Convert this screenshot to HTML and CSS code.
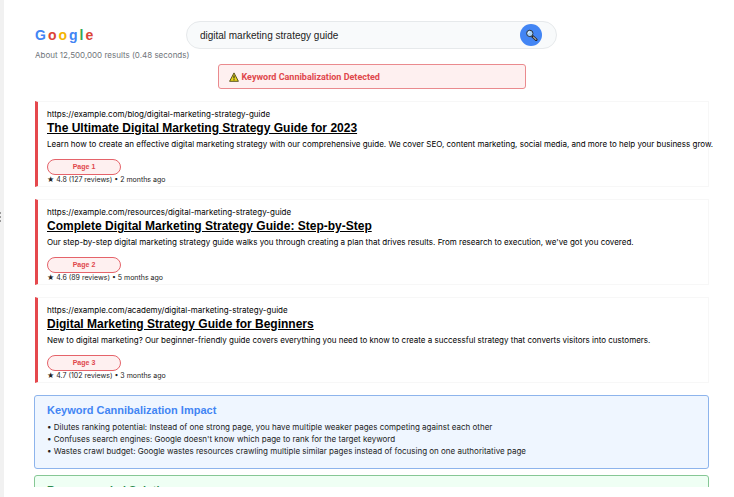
FILE: index.html
```html
<!DOCTYPE html>
<html lang="en">
<head>
  <meta charset="utf-8">
  <title>Keyword Cannibalization</title>
  <link rel="stylesheet" href="styles.css">
</head>
<body>
  <div class="gutter"><span></span><span></span><span></span></div>
  <main class="page">
    <header class="header">
      <div class="brand">
        <div class="logo">
          <span class="blue">G</span><span class="red">o</span><span class="yellow">o</span><span class="blue">g</span><span class="green">l</span><span class="red">e</span>
        </div>
        <p class="stats">About 12,500,000 results (0.48 seconds)</p>
      </div>
      <form class="search">
        <input type="text" aria-label="Search" value="digital marketing strategy guide">
        <button type="submit" aria-label="Search">
          <svg width="14" height="14" viewBox="0 0 14 14">
            <path d="M8.4 8.2l3.8 3.5" stroke="#222" stroke-width="2.6" stroke-linecap="round"/>
            <path d="M9.3 9l2.7 2.5" stroke="#a5a5a5" stroke-width="1.1" stroke-linecap="round"/>
            <circle cx="5.8" cy="5.4" r="3.2" fill="#a9d2f5" stroke="#2a3340" stroke-width="1"/>
            <path d="M4.2 5.2a1.7 1.7 0 0 1 1.5-1.5" fill="none" stroke="#fff" stroke-width="1"/>
          </svg>
        </button>
      </form>
    </header>

    <div class="alert">
      <svg width="10" height="10" viewBox="0 0 10 10">
        <path d="M5 .9L9.4 9.3H.6z" fill="#ead61c" stroke="#4a4510" stroke-width=".9" stroke-linejoin="round"/>
        <path d="M5 3.5v2.9M5 7.2v1.1" stroke="#222" stroke-width="1.1"/>
      </svg>
      <span>Keyword Cannibalization Detected</span>
    </div>

    <article class="result">
      <p class="url">https://example.com/blog/digital-marketing-strategy-guide</p>
      <h3><a href="#">The Ultimate Digital Marketing Strategy Guide for 2023</a></h3>
      <p class="desc">Learn how to create an effective digital marketing strategy with our comprehensive guide. We cover SEO, content marketing, social media, and more to help your business grow.</p>
      <span class="badge">Page 1</span>
      <p class="meta">★ 4.8 (127 reviews) • 2 months ago</p>
    </article>

    <article class="result">
      <p class="url">https://example.com/resources/digital-marketing-strategy-guide</p>
      <h3><a href="#">Complete Digital Marketing Strategy Guide: Step-by-Step</a></h3>
      <p class="desc">Our step-by-step digital marketing strategy guide walks you through creating a plan that drives results. From research to execution, we've got you covered.</p>
      <span class="badge">Page 2</span>
      <p class="meta">★ 4.6 (89 reviews) • 5 months ago</p>
    </article>

    <article class="result">
      <p class="url">https://example.com/academy/digital-marketing-strategy-guide</p>
      <h3><a href="#">Digital Marketing Strategy Guide for Beginners</a></h3>
      <p class="desc">New to digital marketing? Our beginner-friendly guide covers everything you need to know to create a successful strategy that converts visitors into customers.</p>
      <span class="badge">Page 3</span>
      <p class="meta">★ 4.7 (102 reviews) • 3 months ago</p>
    </article>

    <section class="panel impact">
      <h2>Keyword Cannibalization Impact</h2>
      <p>• Dilutes ranking potential: Instead of one strong page, you have multiple weaker pages competing against each other</p>
      <p>• Confuses search engines: Google doesn't know which page to rank for the target keyword</p>
      <p>• Wastes crawl budget: Google wastes resources crawling multiple similar pages instead of focusing on one authoritative page</p>
    </section>

    <section class="panel solution">
      <h2>Recommended Solution</h2>
    </section>
  </main>
</body>
</html>
```

FILE: styles.css
```css
* {
  box-sizing: border-box;
}

body {
  margin: 0;
  height: 100vh;
  display: flex;
  overflow: hidden;
  background: #fff;
  color: #000;
  font-family: Inter, Arial, sans-serif;
  font-size: 8px;
  line-height: 12px;
}

p, h2, h3 {
  margin: 0;
}

h2, h3, .logo {
  font-family: "Liberation Sans", Arial, sans-serif;
}

/* resize handle on the left edge */
.gutter {
  width: 4px;
  flex: none;
  display: flex;
  flex-direction: column;
  align-items: flex-start;
  justify-content: center;
  gap: 2px;
  padding-bottom: 64px;
  background: #f1f1f1;
}

.gutter span {
  width: 1px;
  height: 2px;
  background: #999;
}

.page {
  flex: 1;
  min-width: 0;
  margin-bottom: 10px;
  padding: 21px 25px 0 30px;
  overflow: hidden;
}

.header {
  display: grid;
  grid-template-columns: minmax(0, 1fr) 55% minmax(0, 1fr);
  height: 43px;
}

.brand {
  padding: 5px 0 0 1px;
  white-space: nowrap;
}

.logo {
  display: flex;
  gap: 2px;
  font-size: 14px;
  font-weight: bold;
  line-height: 18px;
}

.blue { color: #4285f4; }
.red { color: #db4437; }
.yellow { color: #f4b400; }
.green { color: #34a853; }

.stats {
  margin-top: 5px;
  color: #70757a;
}

.search {
  display: flex;
  align-items: center;
  height: 28px;
  padding: 0 14px 0 13px;
  background: #f8fafb;
  border: 1px solid #e6e9eb;
  border-radius: 14px;
}

.search input {
  flex: 1;
  min-width: 0;
  padding: 0;
  border: 0;
  outline: 0;
  background: none;
  color: #222;
  font: 10px "Liberation Sans", Arial, sans-serif;
}

.search button {
  width: 22px;
  height: 22px;
  padding: 0;
  display: flex;
  align-items: center;
  justify-content: center;
  border: 0;
  border-radius: 50%;
  background: #4285f4;
}

.alert {
  width: 308px;
  height: 25px;
  margin: 0 auto 12px;
  padding: 0 10px;
  display: flex;
  align-items: center;
  gap: 3px;
  background: #fef0f0;
  border: 1px solid #ea8a8e;
  border-radius: 3px;
  color: #e0474c;
  font-family: Roboto, Arial, sans-serif;
  font-size: 9px;
  font-weight: bold;
}

.result {
  height: 86px;
  margin: 0 0 12px 1px;
  padding: 6px 0 0 9px;
  border: 1px solid #f7f7f7;
  border-left: 3px solid #e5484d;
  white-space: nowrap;
}

.result h3 {
  font-size: 12px;
  line-height: 16px;
}

.result a {
  color: #000;
}

.desc {
  margin: 2px 0 9px;
}

.badge {
  display: block;
  width: 74px;
  height: 16px;
  background: #fef0f0;
  border: 1px solid #e5636a;
  border-radius: 8px;
  color: #e0474c;
  font-family: "Liberation Sans", Arial, sans-serif;
  font-size: 7px;
  font-weight: bold;
  line-height: 14px;
  text-align: center;
}

.meta {
  color: #222;
  font-size: 7px;
  line-height: 9px;
}

.panel {
  margin-bottom: 6px;
  padding: 7px 12px 11px;
  border: 1px solid;
  border-radius: 3px;
  color: #222;
}

.panel h2 {
  margin-bottom: 4px;
  font-size: 11px;
  line-height: 14px;
}

.impact {
  background: #eff6ff;
  border-color: #8db4ec;
}

.impact h2 {
  color: #4285f4;
}

.solution {
  background: #effff4;
  border-color: #86c795;
}

.solution h2 {
  color: #2d8a4e;
}
```
